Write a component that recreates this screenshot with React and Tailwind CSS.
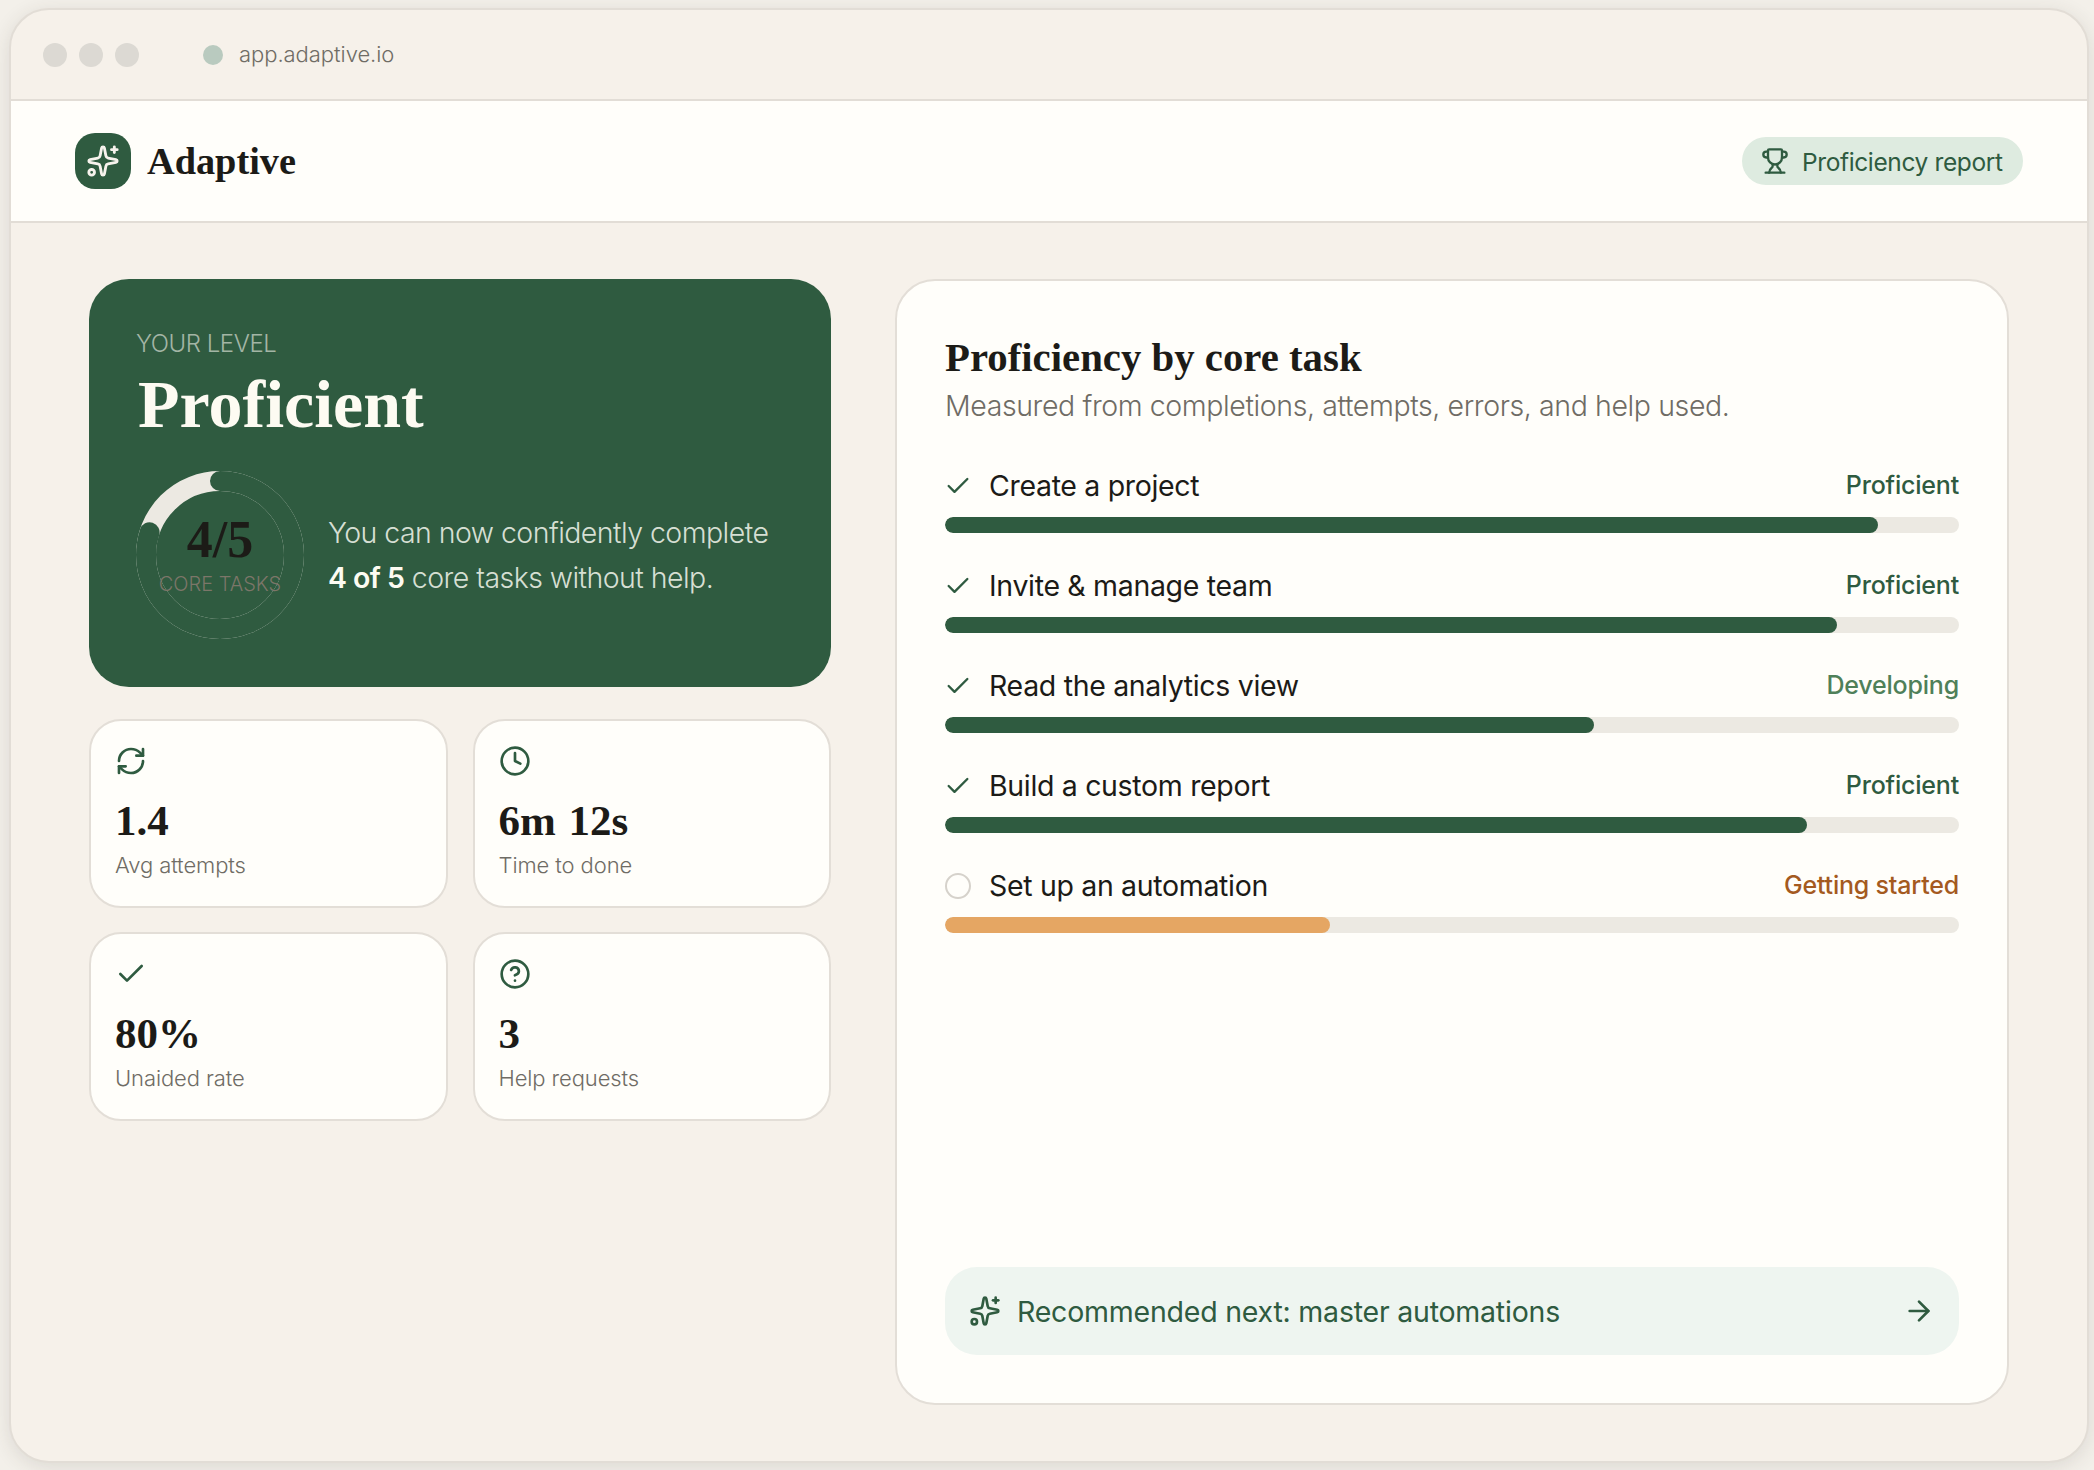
import React from "react";
import { Sparkles, Trophy, Check, RefreshCw, Clock, CircleHelp, ArrowRight } from "lucide-react";

const serif = "font-['Liberation_Serif',serif] font-bold";

const tasks = [
  { label: "Create a project", status: "Proficient", pct: 92, done: true, tone: "text-[#2f5b40]", fill: "bg-[#2f5b40]" },
  { label: "Invite & manage team", status: "Proficient", pct: 88, done: true, tone: "text-[#2f5b40]", fill: "bg-[#2f5b40]" },
  { label: "Read the analytics view", status: "Developing", pct: 64, done: true, tone: "text-[#4f8059]", fill: "bg-[#2f5b40]" },
  { label: "Build a custom report", status: "Proficient", pct: 85, done: true, tone: "text-[#2f5b40]", fill: "bg-[#2f5b40]" },
  { label: "Set up an automation", status: "Getting started", pct: 38, done: false, tone: "text-[#a45a1f]", fill: "bg-[#e5a663]" },
];

const stats = [
  { icon: RefreshCw, value: "1.4", label: "Avg attempts" },
  { icon: Clock, value: "6m 12s", label: "Time to done" },
  { icon: Check, value: "80%", label: "Unaided rate" },
  { icon: CircleHelp, value: "3", label: "Help requests" },
];

function Ring() {
  return (
    <div className="relative w-[170px] h-[170px] shrink-0">
      <svg viewBox="0 0 170 170" className="w-[170px] h-[170px]">
        <circle cx="85" cy="85" r="74" fill="none" stroke="#ece9e2" strokeWidth="20" />
        <circle
          cx="85"
          cy="85"
          r="74"
          fill="none"
          stroke="#2f5b40"
          strokeWidth="20"
          strokeLinecap="round"
          pathLength="100"
          strokeDasharray="80 20"
          transform="rotate(-90 85 85)"
        />
      </svg>
      <div className="absolute inset-0 flex flex-col items-center pt-[40px]">
        <span className={`${serif} text-[52px] leading-[60px] text-[#1c1b17]`}>4/5</span>
        <span className="text-[20px] leading-[24px] font-light text-[#7c7669] mt-[2px] whitespace-nowrap">CORE TASKS</span>
      </div>
    </div>
  );
}

function Stat({ icon: Icon, value, label }) {
  return (
    <div className="h-[189px] bg-[#fffefa] border-2 border-[#e3ded7] rounded-[32px] pl-[24px] pt-[24px]">
      <Icon size={32} strokeWidth={2} className="text-[#2f5b40]" />
      <div className={`${serif} text-[43px] leading-[48px] [word-spacing:2px] text-[#1c1b17] mt-[20px]`}>{value}</div>
      <div className="text-[22px] leading-[30px] font-light tracking-[-0.1px] text-[#6f6c65] mt-[5px]">{label}</div>
    </div>
  );
}

function Task({ label, status, pct, done, tone, fill }) {
  return (
    <div className="h-[100px]">
      <div className="flex items-center h-[40px]">
        <div className="w-[44px] shrink-0 flex items-center">
          {done ? (
            <Check size={28} strokeWidth={2} className="text-[#2f5b40] -ml-[1px]" />
          ) : (
            <span className="block w-[26px] h-[26px] rounded-full border-2 border-[#d6d2cb]" />
          )}
        </div>
        <span className="text-[28.5px] tracking-[-0.33px] text-[#1c1b17]">{label}</span>
        <span className={`ml-auto text-[25px] font-medium tracking-[-0.2px] ${tone}`}>{status}</span>
      </div>
      <div className="h-[16px] mt-[11px] rounded-full bg-[#ece9e2] overflow-hidden">
        <div className={`h-full rounded-full ${fill}`} style={{ width: `${pct}%` }} />
      </div>
    </div>
  );
}

export default function App() {
  return (
    <div className="w-[2094px] h-[1470px] bg-[#f3f0ea] font-['Inter',sans-serif] overflow-hidden pt-[8px] pl-[9px] pr-[5px]">
      <div className="h-[1455px] rounded-[40px] border-2 border-[#e2ddd6] bg-[#f6f1ea] overflow-hidden shadow-[0_4px_20px_rgba(60,50,40,0.12)] flex flex-col">
        <div className="h-[91px] shrink-0 border-b-2 border-[#e2ddd6] flex items-center pl-[32px]">
          <span className="w-[24px] h-[24px] rounded-full bg-[#dcd9d3]" />
          <span className="w-[24px] h-[24px] rounded-full bg-[#dcd9d3] ml-[12px]" />
          <span className="w-[24px] h-[24px] rounded-full bg-[#dcd9d3] ml-[12px]" />
          <span className="w-[20px] h-[20px] rounded-full bg-[#b9cabf] ml-[64px]" />
          <span className="ml-[16px] text-[22px] font-light tracking-[-0.05px] text-[#6f6c65]">app.adaptive.io</span>
        </div>
        <div className="h-[122px] shrink-0 bg-[#fffefa] border-b-2 border-[#e2ddd6] flex items-center pl-[64px] pr-[64px]">
          <div className="w-[56px] h-[56px] rounded-[20px] bg-[#2f5b40] flex items-center justify-center">
            <Sparkles size={34} strokeWidth={2} className="text-[#f7f3ed]" />
          </div>
          <span className={`${serif} text-[38.3px] text-[#1c1b17] ml-[16px] mt-[1px]`}>Adaptive</span>
          <div className="ml-auto h-[48px] w-[281px] rounded-full bg-[#deebe0] flex items-center pl-[19px] text-[#2f5b40]">
            <Trophy size={28} strokeWidth={2} />
            <span className="ml-[13px] mt-[2px] text-[24.5px] tracking-[-0.38px] whitespace-nowrap">Proficiency report</span>
          </div>
        </div>
        <main className="flex-1 pl-[78px] pr-[78px] py-[56px] grid grid-cols-[742px_1fr] gap-[64px]">
          <div>
            <section className="h-[408px] rounded-[40px] bg-[#2f5b40] pl-[47px] pt-[50px]">
              <div className="text-[24px] leading-[30px] font-light text-[#a3b5a5] tracking-[-0.45px]">YOUR LEVEL</div>
              <h1 className={`${serif} text-[68px] leading-[72px] text-[#fdfbf2] ml-[2px] mt-[9px]`}>Proficient</h1>
              <div className="flex items-center mt-[30px] -ml-[1px]">
                <Ring />
                <p className="ml-[23px] text-[28.5px] leading-[45px] tracking-[-0.55px] font-light text-[#d6dfd3] whitespace-nowrap">
                  You can now confidently complete
                  <br />
                  <span className="font-semibold text-[#fdfbf2]">4 of 5</span> core tasks without help.
                </p>
              </div>
            </section>
            <div className="grid grid-cols-2 gap-x-[25px] gap-y-[24px] mt-[32px]">
              {stats.map((s) => (
                <Stat key={s.label} {...s} />
              ))}
            </div>
          </div>
          <section className="bg-[#fffefa] border-2 border-[#e3ded7] rounded-[40px] pl-[48px] pr-[48px] pt-[54px] pb-[48px] flex flex-col">
            <h2 className={`${serif} text-[40.8px] leading-[46px] text-[#1c1b17]`}>Proficiency by core task</h2>
            <p className="text-[28.5px] leading-[40px] tracking-[-0.4px] font-light text-[#6f6c65] mt-[5px]">
              Measured from completions, attempts, errors, and help used.
            </p>
            <div className="mt-[40px]">
              {tasks.map((t) => (
                <Task key={t.label} {...t} />
              ))}
            </div>
            <div className="mt-auto h-[88px] rounded-[32px] bg-[#eef5f0] flex items-center pl-[24px] pr-[24px] text-[#2f5b40]">
              <Sparkles size={32} strokeWidth={2} />
              <span className="ml-[16px] mt-[2px] text-[28.5px] tracking-[-0.22px]">Recommended next: master automations</span>
              <ArrowRight size={32} strokeWidth={2} className="ml-auto" />
            </div>
          </section>
        </main>
      </div>
    </div>
  );
}
